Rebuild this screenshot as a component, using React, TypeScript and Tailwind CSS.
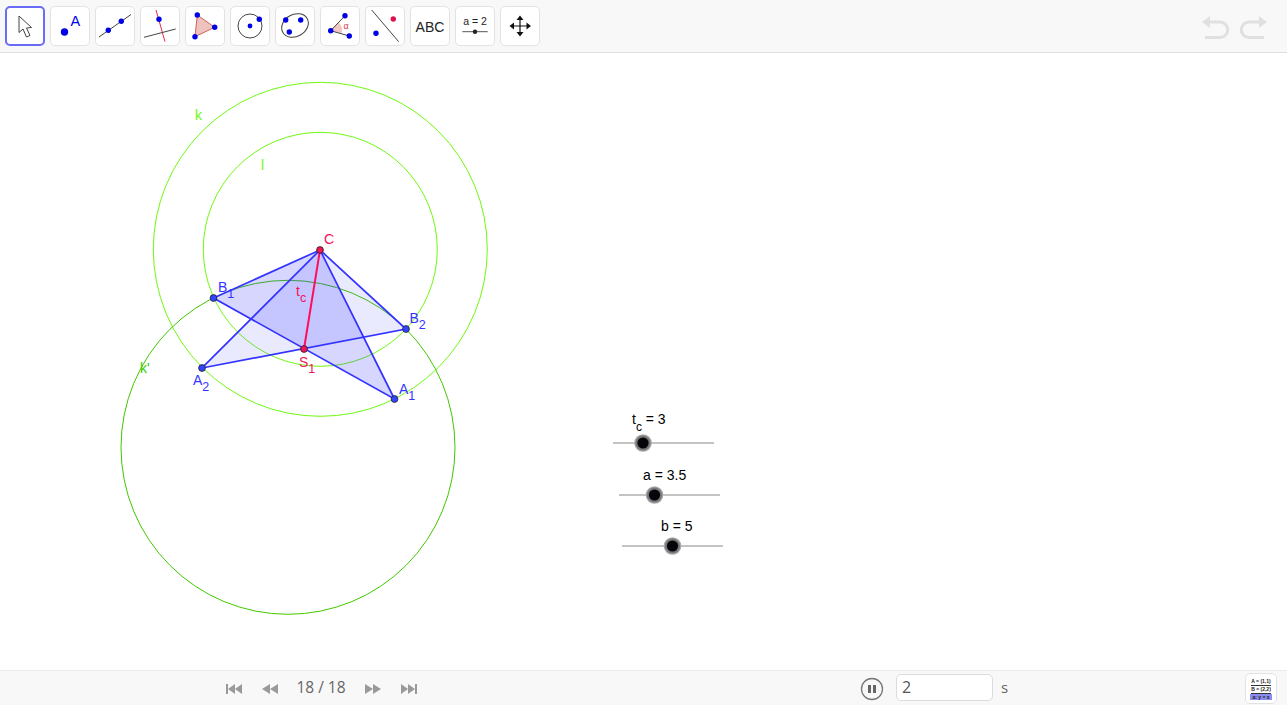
import React from 'react';

const FONT = '"Liberation Sans", Arial, sans-serif';
const UI_FONT = '"Open Sans", "Noto Sans", sans-serif';

function Dot({ x, y, r = 2.7, fill = '#0000e6' }: { x: number; y: number; r?: number; fill?: string }) {
  return <circle cx={x} cy={y} r={r} fill={fill} />;
}

function ToolButton({ active, children }: { active?: boolean; children: React.ReactNode }) {
  return (
    <div
      className={`w-10 h-10 rounded-[5px] bg-white shrink-0 flex items-center justify-center ${
        active ? 'border-2 border-[#6a6cf5]' : 'border border-[#e3e3e3]'
      }`}
    >
      <svg width="32" height="32" viewBox="0 0 32 32" fill="none">
        {children}
      </svg>
    </div>
  );
}

function Toolbar() {
  return (
    <div className="h-[53px] shrink-0 bg-[#f8f8f8] border-b border-[#dfdfdf] flex items-center pl-[5px] pr-[20px] gap-[5px]">
      <ToolButton active>
        <path d="M10 6 L10 22.5 L14 19 L17.5 27 L21 25.5 L17.5 18 L22.5 17.5 Z" fill="#fff" stroke="#444" strokeWidth="1" strokeLinejoin="round" />
      </ToolButton>
      <ToolButton>
        <Dot x={10.5} y={22} r={3.7} />
        <text x={16.5} y={15.5} fontSize="14.5" fill="#0000e6" style={{ fontFamily: FONT }}>A</text>
      </ToolButton>
      <ToolButton>
        <path d="M0 27 L32 4.5" stroke="#444" strokeWidth="1" />
        <Dot x={9.3} y={20.3} />
        <Dot x={22.3} y={11.3} />
      </ToolButton>
      <ToolButton>
        <path d="M12 0 L21 31.7" stroke="#e8284f" strokeWidth="1" />
        <path d="M0 27.3 L31.7 19" stroke="#444" strokeWidth="1" />
        <Dot x={15} y={9.3} />
      </ToolButton>
      <ToolButton>
        <path d="M8.3 5 L25.7 17.3 L6 26.7 Z" fill="#eec3bd" stroke="#d0605a" strokeWidth="1" />
        <Dot x={8.3} y={5} />
        <Dot x={25.7} y={17.3} />
        <Dot x={6} y={26.7} />
      </ToolButton>
      <ToolButton>
        <circle cx="16" cy="16" r="12" stroke="#444" strokeWidth="1" />
        <Dot x={16} y={16} r={2.4} />
        <Dot x={25.3} y={9.3} />
      </ToolButton>
      <ToolButton>
        <ellipse cx="16" cy="15.5" rx="14" ry="11" transform="rotate(-30 16 15.5)" stroke="#444" strokeWidth="1" />
        <Dot x={6.7} y={10} />
        <Dot x={21.7} y={10} />
        <Dot x={10.3} y={22} />
      </ToolButton>
      <ToolButton>
        <path d="M6.7 20.7 L14.3 12 A 11 11 0 0 1 17.7 23.3 Z" fill="#f3c7c3" />
        <path d="M6.7 20.7 L21 5.7 M6.7 20.7 L25.3 26" stroke="#444" strokeWidth="1" />
        <Dot x={6.7} y={20.7} />
        <Dot x={21} y={5.7} />
        <Dot x={25.3} y={26} />
        <text x={19.5} y={19} fontSize="9" fill="#d8354a" style={{ fontFamily: FONT }}>α</text>
      </ToolButton>
      <ToolButton>
        <path d="M2.7 0 L29.7 31.7" stroke="#444" strokeWidth="1" />
        <Dot x={24.3} y={9} fill="#e0104f" />
        <Dot x={7} y={23.3} />
      </ToolButton>
      <ToolButton>
        <text x="16" y="21.5" textAnchor="middle" fontSize="14" fill="#222" style={{ fontFamily: FONT }}>ABC</text>
      </ToolButton>
      <ToolButton>
        <text x="16" y="15" textAnchor="middle" fontSize="10.5" fill="#222" style={{ fontFamily: FONT }}>a = 2</text>
        <path d="M3.3 21.7 L28.7 21.7" stroke="#555" strokeWidth="1" />
        <circle cx="16" cy="21.7" r="2.2" fill="#222" />
      </ToolButton>
      <ToolButton>
        <path d="M16 8 L16 24 M8 16 L24 16" stroke="#111" strokeWidth="1.2" />
        <path d="M16 5.5 L19.5 10 L12.5 10 Z M16 26.5 L19.5 22 L12.5 22 Z M5.5 16 L10 12.5 L10 19.5 Z M27 16 L22.5 12.5 L22.5 19.5 Z" fill="#111" />
      </ToolButton>
      <div className="ml-auto flex items-center gap-[9px] text-[#e0e0e0] pt-[3px]">
        <svg width="28" height="24" viewBox="0 0 28 24" fill="none">
          <path d="M8 6 L18 6 A 7.5 7.5 0 0 1 18 21.5 L3 21.5" stroke="currentColor" strokeWidth="3" />
          <path d="M0 6 L8 0 L8 12 Z" fill="currentColor" />
        </svg>
        <svg width="28" height="24" viewBox="0 0 28 24" fill="none">
          <path d="M20 6 L10 6 A 7.5 7.5 0 0 0 10 21.5 L25 21.5" stroke="currentColor" strokeWidth="3" />
          <path d="M28 6 L20 0 L20 12 Z" fill="currentColor" />
        </svg>
      </div>
    </div>
  );
}

function Label({ x, y, text, sub, color, size = 14 }: { x: number; y: number; text: string; sub?: string; color: string; size?: number }) {
  return (
    <text x={x} y={y} fontSize={size} fill={color} style={{ fontFamily: FONT }}>
      {text}
      {sub && <tspan dy="6" fontSize={size - 1.5}>{sub}</tspan>}
    </text>
  );
}

function Point({ x, y, fill }: { x: number; y: number; fill: string }) {
  return <circle cx={x} cy={y} r="3.4" fill={fill} stroke="#222" strokeWidth="0.8" />;
}

function Slider({ x, y, knob, labelX, labelY, label, sub, rest }: { x: number; y: number; knob: number; labelX: number; labelY: number; label: string; sub?: string; rest?: string }) {
  return (
    <g>
      <line x1={x} y1={y} x2={x + 101} y2={y} stroke="#888" strokeWidth="1" />
      <circle cx={knob} cy={y} r="8.8" fill="#a8a8a8" />
      <circle cx={knob} cy={y} r="7.6" fill="#777" />
      <circle cx={knob} cy={y} r="5.6" fill="#05050c" />
      <text x={labelX} y={labelY} fontSize="14" fill="#000" style={{ fontFamily: FONT }}>
        {label}
        {sub && <tspan dy="7" fontSize="12">{sub}</tspan>}
        {rest && <tspan dy={sub ? -7 : 0}>{rest}</tspan>}
      </text>
    </g>
  );
}

// coordinates are page y minus 53 (height of the toolbar)
function Construction() {
  const dy = -53;
  const C = { x: 320, y: 250 + dy };
  const A1 = { x: 394.5, y: 399 + dy };
  const A2 = { x: 202, y: 368 + dy };
  const B1 = { x: 213.5, y: 298 + dy };
  const B2 = { x: 406, y: 329 + dy };
  const S = { x: 304, y: 349 + dy };
  return (
    <svg className="block w-full h-full" viewBox="0 0 1287 617" fill="none">
      <circle cx="320.3" cy={249.3 + dy} r="167" stroke="#70f810" strokeWidth="1" />
      <circle cx="320.3" cy={249.3 + dy} r="117" stroke="#70f810" strokeWidth="1" />
      <circle cx="288" cy={447.3 + dy} r="167" stroke="#40c800" strokeWidth="1" />
      <path d={`M${C.x} ${C.y} L${A1.x} ${A1.y} L${B1.x} ${B1.y} Z`} fill="#3333ff" fillOpacity="0.2" stroke="#3333ff" strokeWidth="1.7" />
      <path d={`M${C.x} ${C.y} L${A2.x} ${A2.y} L${B2.x} ${B2.y} Z`} fill="#3333ff" fillOpacity="0.1" stroke="#3333ff" strokeWidth="1.7" />
      <line x1={C.x} y1={C.y} x2={S.x} y2={S.y} stroke="#ff0f5a" strokeWidth="2" />
      <Point x={A1.x} y={A1.y} fill="#3344ff" />
      <Point x={A2.x} y={A2.y} fill="#3344ff" />
      <Point x={B1.x} y={B1.y} fill="#3344ff" />
      <Point x={B2.x} y={B2.y} fill="#3344ff" />
      <Point x={C.x} y={C.y} fill="#f0145a" />
      <Point x={S.x} y={S.y} fill="#f0145a" />
      <Label x={195} y={120 + dy} text="k" color="#70f810" />
      <Label x={261} y={170 + dy} text="l" color="#70f810" />
      <Label x={140} y={373 + dy} text="k'" color="#40c800" />
      <Label x={324} y={244 + dy} text="C" color="#f0145a" />
      <Label x={218} y={292 + dy} text="B" sub="1" color="#3333ff" />
      <Label x={409.5} y={323 + dy} text="B" sub="2" color="#3333ff" />
      <Label x={193} y={385 + dy} text="A" sub="2" color="#3333ff" />
      <Label x={399} y={394 + dy} text="A" sub="1" color="#3333ff" />
      <Label x={296} y={296 + dy} text="t" sub="c" color="#f0145a" />
      <Label x={299} y={367 + dy} text="S" sub="1" color="#f0145a" />
      <Slider x={613} y={443 + dy} knob={643} labelX={632} labelY={424 + dy} label="t" sub="c" rest=" = 3" />
      <Slider x={619} y={495 + dy} knob={654.5} labelX={643} labelY={480 + dy} label="a = 3.5" />
      <Slider x={622} y={546 + dy} knob={672.5} labelX={661} labelY={531 + dy} label="b = 5" />
    </svg>
  );
}

function PlayerIcon({ d }: { d: string }) {
  return (
    <svg width="18" height="12" viewBox="0 0 18 12" fill="#9a9a9a">
      <path d={d} />
    </svg>
  );
}

function BottomBar() {
  return (
    <div className="h-[35px] shrink-0 bg-[#f8f8f8] border-t border-[#ececec] flex items-center pt-[1px]" style={{ fontFamily: UI_FONT }}>
      <div className="ml-[225px] flex items-center">
        <PlayerIcon d="M1 1h2v10H1z M3 6l7-5v10z M10 6l7-5v10z" />
        <div className="w-[18px]" />
        <PlayerIcon d="M1 6l8-5v10z M9 6l8-5v10z" />
        <div className="ml-[16px] mr-[17px] -mt-[2px] text-[15.5px] leading-none text-[#666] w-[52px] text-center whitespace-nowrap">18 / 18</div>
        <PlayerIcon d="M1 1l8 5-8 5z M9 1l8 5-8 5z" />
        <div className="w-[18px]" />
        <PlayerIcon d="M1 1l7 5-7 5z M8 1l7 5-7 5z M15 1h2v10h-2z" />
      </div>
      <div className="ml-[442px] flex items-center">
        <svg width="24" height="24" viewBox="0 0 24 24" fill="none">
          <circle cx="12" cy="12" r="10.5" stroke="#777" strokeWidth="1.3" />
          <path d="M8 8h3v8H8z M13 8h3v8h-3z" fill="#666" />
        </svg>
        <div className="ml-[12px] -mt-[3px] w-[97px] h-[27px] bg-white border border-[#dcdcdc] rounded-[5px] pl-[5px] flex items-center text-[16px] text-[#555]">2</div>
        <div className="ml-[8px] -mt-[3px] text-[15px] text-[#666]">s</div>
      </div>
      <div className="ml-auto mr-[10px] w-[32px] h-[31px] bg-white border border-[#e3e3e3] rounded-[5px] flex flex-col items-center justify-center" style={{ fontFamily: FONT }}>
        <div className="text-[5px] leading-[7px] font-bold text-[#222] border-b border-[#333]">A = (1,1)</div>
        <div className="text-[5px] leading-[7px] font-bold text-[#222] border-b border-[#333]">B = (2,2)</div>
        <div className="text-[5px] leading-[6px] font-bold text-[#222] bg-[#8c8cf0] w-[22px] text-center">a: y = x</div>
      </div>
    </div>
  );
}

export default function App() {
  return (
    <div className="w-[1287px] h-[707px] flex flex-col bg-white overflow-hidden">
      <Toolbar />
      <div className="h-[617px] shrink-0">
        <Construction />
      </div>
      <BottomBar />
    </div>
  );
}
